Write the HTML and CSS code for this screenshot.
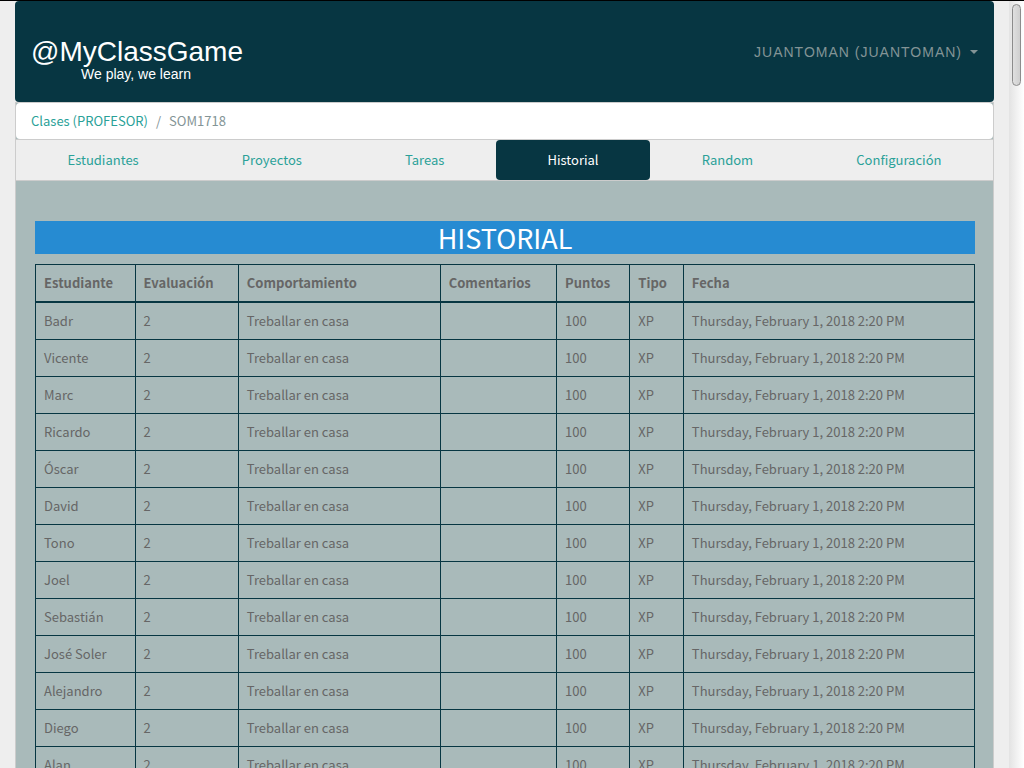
FILE: index.html
```
<!DOCTYPE html>
<html lang="es">
<head>
<meta charset="utf-8">
<title>MyClassGame - Historial</title>
<link rel="stylesheet" href="styles.css">
</head>
<body>
<div class="viewport">
<div class="page">
<header class="navbar">
<a class="brand" href="#"><span class="brand-name">@MyClassGame</span><span class="brand-tag">We play, we learn</span></a>
<button class="user-menu" type="button">JUANTOMAN (JUANTOMAN)<span class="caret"></span></button>
</header>
<main class="panel">
<nav aria-label="Ruta"><ol class="breadcrumb"><li><a href="#">Clases (PROFESOR)</a></li><li class="current">SOM1718</li></ol></nav>
<nav class="tabs" aria-label="Secciones">
<a href="#">Estudiantes</a>
<a href="#">Proyectos</a>
<a href="#">Tareas</a>
<a class="active" href="#" aria-current="page">Historial</a>
<a href="#">Random</a>
<a href="#">Configuración</a>
</nav>
<section class="content">
<h1 class="title">HISTORIAL</h1>
<table class="history">
<colgroup><col class="c-student"><col class="c-term"><col class="c-behavior"><col class="c-comments"><col class="c-points"><col class="c-type"><col class="c-date"></colgroup>
<thead><tr><th>Estudiante</th><th>Evaluación</th><th>Comportamiento</th><th>Comentarios</th><th>Puntos</th><th>Tipo</th><th>Fecha</th></tr></thead>
<tbody>
<tr><td>Badr</td><td>2</td><td>Treballar en casa</td><td></td><td>100</td><td>XP</td><td>Thursday, February 1, 2018 2:20 PM</td></tr>
<tr><td>Vicente</td><td>2</td><td>Treballar en casa</td><td></td><td>100</td><td>XP</td><td>Thursday, February 1, 2018 2:20 PM</td></tr>
<tr><td>Marc</td><td>2</td><td>Treballar en casa</td><td></td><td>100</td><td>XP</td><td>Thursday, February 1, 2018 2:20 PM</td></tr>
<tr><td>Ricardo</td><td>2</td><td>Treballar en casa</td><td></td><td>100</td><td>XP</td><td>Thursday, February 1, 2018 2:20 PM</td></tr>
<tr><td>Óscar</td><td>2</td><td>Treballar en casa</td><td></td><td>100</td><td>XP</td><td>Thursday, February 1, 2018 2:20 PM</td></tr>
<tr><td>David</td><td>2</td><td>Treballar en casa</td><td></td><td>100</td><td>XP</td><td>Thursday, February 1, 2018 2:20 PM</td></tr>
<tr><td>Tono</td><td>2</td><td>Treballar en casa</td><td></td><td>100</td><td>XP</td><td>Thursday, February 1, 2018 2:20 PM</td></tr>
<tr><td>Joel</td><td>2</td><td>Treballar en casa</td><td></td><td>100</td><td>XP</td><td>Thursday, February 1, 2018 2:20 PM</td></tr>
<tr><td>Sebastián</td><td>2</td><td>Treballar en casa</td><td></td><td>100</td><td>XP</td><td>Thursday, February 1, 2018 2:20 PM</td></tr>
<tr><td>José Soler</td><td>2</td><td>Treballar en casa</td><td></td><td>100</td><td>XP</td><td>Thursday, February 1, 2018 2:20 PM</td></tr>
<tr><td>Alejandro</td><td>2</td><td>Treballar en casa</td><td></td><td>100</td><td>XP</td><td>Thursday, February 1, 2018 2:20 PM</td></tr>
<tr><td>Diego</td><td>2</td><td>Treballar en casa</td><td></td><td>100</td><td>XP</td><td>Thursday, February 1, 2018 2:20 PM</td></tr>
<tr><td>Alan</td><td>2</td><td>Treballar en casa</td><td></td><td>100</td><td>XP</td><td>Thursday, February 1, 2018 2:20 PM</td></tr>
</tbody>
</table>
</section>
</main>
</div>
<div class="scroll-track"><div class="scroll-thumb"></div></div>
</div>
</body>
</html>
```
FILE: styles.css
```
* { box-sizing: border-box; }
body {
  margin: 0;
  background: #eee;
  color: #666;
  font: 13px/20px "Noto Sans CJK SC", "Noto Sans", sans-serif;
}
a { color: #2aa198; text-decoration: none; }
.viewport {
  display: flex;
  height: 100vh;
  overflow: hidden;
  border-top: 1px solid #000;
}
.page { flex: 1; min-width: 0; padding: 0 15px; }
.navbar {
  display: flex;
  justify-content: space-between;
  align-items: center;
  height: 101px;
  padding: 0 16px;
  border-radius: 4px;
  background: #073642;
}
.brand {
  display: flex;
  flex-direction: column;
  padding-top: 16px;
  color: #fff;
  font-family: "Liberation Sans", Arial, sans-serif;
}
.brand-name { font-size: 28px; line-height: 28px; }
.brand-tag { padding-left: 50px; font-size: 14px; line-height: 16px; }
.user-menu {
  display: flex;
  align-items: center;
  gap: 8px;
  padding: 0;
  border: 0;
  background: none;
  color: #839496;
  font: 14px/20px "Liberation Sans", Arial, sans-serif;
  letter-spacing: 1px;
}
.caret {
  border-top: 4px solid #839496;
  border-left: 4px solid transparent;
  border-right: 4px solid transparent;
}
.panel { border: 1px solid #ccc; background: #a9baba; }
.breadcrumb {
  display: flex;
  margin: 0;
  padding: 8px 15px;
  border-radius: 4px;
  background: #fff;
  list-style: none;
}
.breadcrumb .current { color: #839496; }
.breadcrumb .current::before { content: "/"; padding: 0 8px; }
.tabs {
  display: flex;
  border-top: 1px solid #ccc;
  border-bottom: 1px solid #ccc;
  background: #eee;
}
.tabs a { flex: 1 1 auto; padding: 10px 15px; border-radius: 4px; text-align: center; }
.tabs .active { background: #073642; color: #fff; }
.content { padding: 40px 18px 20px 19px; }
.title {
  margin: 0 0 10px;
  background: #268bd2;
  color: #fff;
  font-size: 27px;
  line-height: 33px;
  font-weight: 400;
  text-align: center;
}
.history { width: 100%; border-collapse: collapse; table-layout: fixed; }
.history th, .history td {
  padding: 8px;
  border: 1px solid #073642;
  text-align: left;
  white-space: nowrap;
}
.history thead th { border-bottom-width: 2px; }
.c-student { width: 10.6%; }
.c-term { width: 11%; }
.c-behavior { width: 21.5%; }
.c-comments { width: 12.4%; }
.c-points { width: 7.8%; }
.c-type { width: 5.7%; }
.c-date { width: 31%; }
.scroll-track {
  width: 15px;
  padding: 3px 1px 0 3px;
  background: linear-gradient(to right, #e3e3e3, #fff);
}
.scroll-thumb {
  width: 9px;
  height: 82px;
  border: 1px solid #8c8c8c;
  border-radius: 5px;
  background: linear-gradient(to right, #e0e0e0, #cfcfcf);
}
```
